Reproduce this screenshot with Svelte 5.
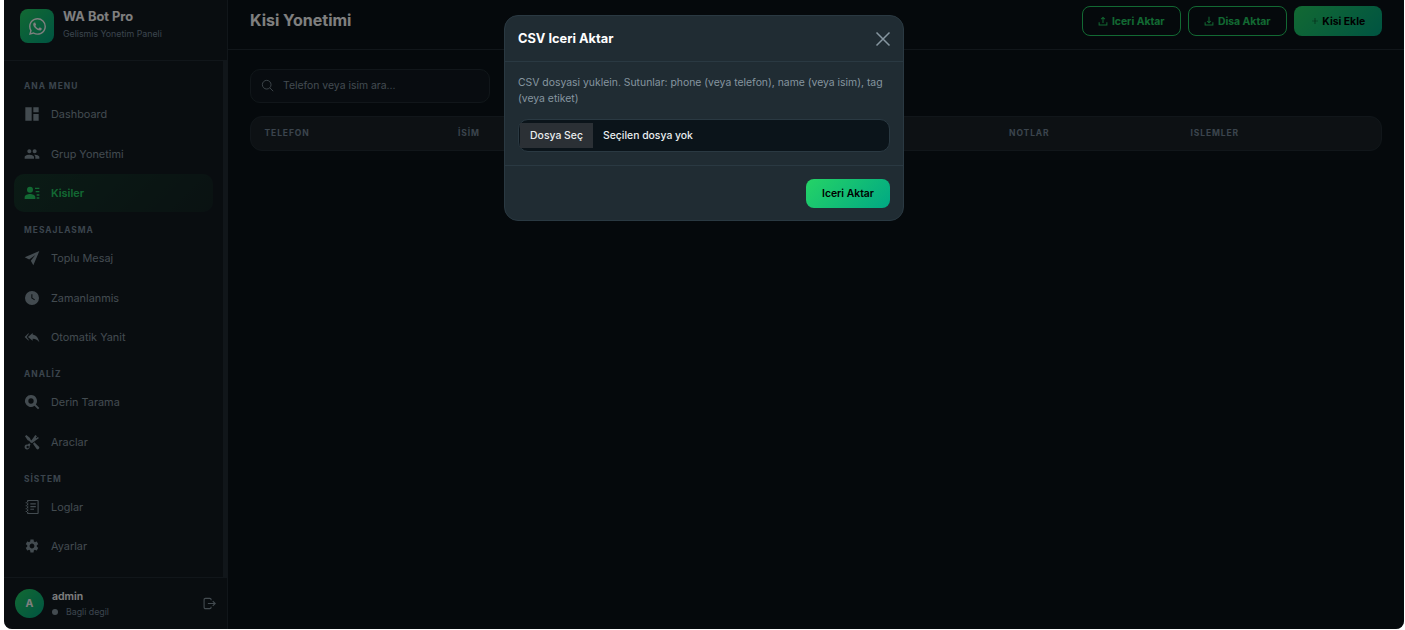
<script>
  const groups = [
    { title: 'ANA MENU', items: [
      { label: 'Dashboard', icon: 'dash' },
      { label: 'Grup Yonetimi', icon: 'group' },
      { label: 'Kisiler', icon: 'contacts', active: true }
    ] },
    { title: 'MESAJLASMA', items: [
      { label: 'Toplu Mesaj', icon: 'send' },
      { label: 'Zamanlanmis', icon: 'clock' },
      { label: 'Otomatik Yanit', icon: 'reply' }
    ] },
    { title: 'ANALİZ', items: [
      { label: 'Derin Tarama', icon: 'search' },
      { label: 'Araclar', icon: 'tools' }
    ] },
    { title: 'SİSTEM', items: [
      { label: 'Loglar', icon: 'log' },
      { label: 'Ayarlar', icon: 'gear' }
    ] }
  ];
  const columns = [
    { label: 'TELEFON', w: 193.5 },
    { label: 'İSİM', w: 551 },
    { label: 'NOTLAR', w: 181.5 },
    { label: 'ISLEMLER', w: 170 }
  ];
</script>

{#snippet navIcon(name)}
  <svg class="nav-icon" viewBox="0 0 24 24" fill="currentColor">
    {#if name === 'dash'}
      <path d="M2 2h9.500v20H2zM14 2h8v7.500h-8zM14 12h8v10h-8z" />
    {:else if name === 'group'}
      <path d="M16 11c1.660 0 2.990-1.340 2.990-3S17.660 5 16 5c-1.660 0-3 1.340-3 3s1.340 3 3 3zm-8 0c1.660 0 2.990-1.340 2.990-3S9.660 5 8 5C6.340 5 5 6.340 5 8s1.340 3 3 3zm0 2c-2.330 0-7 1.170-7 3.500V19h14v-2.500c0-2.330-4.670-3.500-7-3.500zm8 0c-.29 0-.62.02-.97.05 1.160.84 1.970 1.970 1.970 3.450V19h6v-2.500c0-2.330-4.670-3.500-7-3.500z" />
    {:else if name === 'contacts'}
      <path d="M9 11.500a4.500 4.500 0 1 0 0-9 4.500 4.500 0 0 0 0 9zm0 2c-3.300 0-8 1.700-8 4.700V21h16v-2.800c0-3-4.700-4.700-8-4.700zM16.500 4H23v2h-6.500zM17.500 9H23v2h-5.500zM19 14h4v2h-4zM19 18.500h4v2h-4z" />
    {:else if name === 'send'}
      <path d="M23 1.500 1 11l6.800 3.200L17 7.500l-6.800 8.700L14 23z" />
    {:else if name === 'clock'}
      <path fill-rule="evenodd" d="M12 1.500a10.500 10.500 0 1 0 0 21 10.500 10.500 0 0 0 0-21zm-1 5h1.600v5.200l3.800 2.400-.8 1.300-4.600-2.900z" />
    {:else if name === 'reply'}
      <path d="M7 7.500V6L1 12l6 5.500V16l-3-4zm6 .8V6l-7 6 7 5.500v-3c5 0 7.500 2 10 5.500-1-5.500-4-10.500-10-11.700z" />
    {:else if name === 'search'}
      <path fill-rule="evenodd" d="M10.500 1.500a9 9 0 1 0 5.200 16.300l5.300 5.200 2-2-5.200-5.300A9 9 0 0 0 10.500 1.500zm0 5a4 4 0 1 1 0 8 4 4 0 0 1 0-8z" />
    {:else if name === 'tools'}
      <path d="M17 1.500 9.500 12l2.300 2L22.500 6l-1.800-1.500-2 1.800-1-1 1.800-2z" />
      <path d="M1.500 3.500 3.500 1.500l5.500 4.500.5 2 3 3-2 2-3-3-2-.5z" />
      <path d="M13.500 14.500l2-2 7 6.500a2.500 2.500 0 0 1-3.500 3.500zM9.800 15.800l-2-2-2 2a3.800 3.800 0 1 0 2.500 2.500zM5.500 21.300a1.800 1.800 0 1 1 0-3.600 1.800 1.800 0 0 1 0 3.600z" />
    {:else if name === 'log'}
      <path fill-rule="evenodd" d="M6 1.500h14.500A1.500 1.500 0 0 1 22 3v18a1.500 1.500 0 0 1-1.500 1.500H6A1.500 1.500 0 0 1 4.500 21V3A1.500 1.500 0 0 1 6 1.500zm.3 1.600v17.800h14V3.100zM9.500 6.500h8.200v1.700H9.500zM9.500 10.500h8.200v1.700H9.500zM9.500 14.500h5.500v1.700H9.500zM2.500 5h4v1.500h-4zM2.500 9.500h4V11h-4zM2.500 14h4v1.500h-4zM2.500 18h4v1.500h-4z" />
    {:else}
      <path d="M19.140 12.940c.04-.3.06-.61.06-.94 0-.32-.02-.64-.07-.94l2.030-1.580c.18-.14.23-.41.12-.61l-1.920-3.320c-.12-.22-.37-.29-.59-.22l-2.390.96c-.5-.38-1.030-.7-1.620-.94l-.36-2.540c-.04-.24-.24-.41-.48-.41h-3.840c-.24 0-.43.17-.47.41l-.36 2.540c-.59.24-1.130.57-1.620.94l-2.390-.96c-.22-.08-.47 0-.59.22L2.740 8.870c-.12.21-.08.47.12.61l2.030 1.580c-.05.3-.09.63-.09.94s.02.64.07.94l-2.030 1.580c-.18.14-.23.41-.12.61l1.920 3.320c.12.22.37.29.59.22l2.390-.96c.5.38 1.030.7 1.620.94l.36 2.540c.05.24.24.41.48.41h3.840c.24 0 .44-.17.47-.41l.36-2.540c.59-.24 1.130-.56 1.620-.94l2.390.96c.22.08.47 0 .59-.22l1.920-3.320c.12-.22.07-.47-.12-.61l-2.010-1.580zM12 15.600c-1.980 0-3.600-1.620-3.600-3.600s1.620-3.600 3.600-3.600 3.600 1.620 3.600 3.600-1.620 3.600-3.600 3.600z" />
    {/if}
  </svg>
{/snippet}

<div class="window">
  <aside class="sidebar">
    <div class="brand">
      <div class="logo">
        <svg viewBox="0 0 16 16" fill="#fff"><path d="M13.601 2.326A7.854 7.854 0 0 0 7.994 0C3.627 0 .068 3.558.064 7.926c0 1.399.366 2.76 1.057 3.965L0 16l4.204-1.102a7.933 7.933 0 0 0 3.79.965h.004c4.368 0 7.926-3.558 7.93-7.93A7.898 7.898 0 0 0 13.6 2.326zM7.994 14.521a6.573 6.573 0 0 1-3.356-.92l-.24-.144-2.494.654.666-2.433-.156-.251a6.56 6.56 0 0 1-1.007-3.505c0-3.626 2.957-6.584 6.591-6.584a6.56 6.56 0 0 1 4.66 1.931 6.557 6.557 0 0 1 1.928 4.66c-.004 3.639-2.961 6.592-6.592 6.592zm3.615-4.934c-.197-.099-1.17-.578-1.353-.646-.182-.065-.315-.099-.445.099-.133.197-.513.646-.627.775-.114.133-.232.148-.43.05-.197-.1-.836-.308-1.592-.985-.59-.525-.985-1.175-1.103-1.372-.114-.198-.011-.304.088-.403.087-.088.197-.232.296-.346.1-.114.133-.198.198-.33.065-.134.034-.248-.015-.347-.05-.099-.445-1.076-.612-1.47-.16-.389-.323-.335-.445-.34-.114-.007-.247-.007-.38-.007a.729.729 0 0 0-.529.247c-.182.198-.691.677-.691 1.654 0 .977.71 1.916.81 2.049.098.133 1.394 2.132 3.383 2.992.47.205.84.326 1.129.418.475.152.904.129 1.246.08.38-.058 1.171-.48 1.338-.943.164-.464.164-.86.114-.943-.049-.084-.182-.133-.38-.232z" /></svg>
      </div>
      <div>
        <div class="brand-name">WA Bot Pro</div>
        <div class="brand-sub">Gelismis Yonetim Paneli</div>
      </div>
    </div>

    <nav class="nav">
      {#each groups as group}
        <div class="group-title">{group.title}</div>
        {#each group.items as item}
          <div class="nav-item" class:active={item.active}>
            {@render navIcon(item.icon)}
            <span>{item.label}</span>
          </div>
        {/each}
      {/each}
    </nav>

    <div class="user">
      <div class="avatar">A</div>
      <div class="user-info">
        <div class="user-name">admin</div>
        <div class="user-status"><i></i>Bagli degil</div>
      </div>
      <svg class="logout" viewBox="0 0 24 24" fill="none" stroke="currentColor" stroke-width="2"><path d="M15 6V5a2.500 2.500 0 0 0-2.500-2.500h-8A2.500 2.500 0 0 0 2 5v14a2.500 2.500 0 0 0 2.500 2.500h8A2.500 2.500 0 0 0 15 19v-1M9 12h13.500M18 7.500l4.500 4.500-4.500 4.500" /></svg>
    </div>
  </aside>

  <main class="main">
    <header class="topbar">
      <h1>Kisi Yonetimi</h1>
      <div class="actions">
        <button class="btn outline">
          <svg viewBox="0 0 16 16" fill="currentColor"><path d="M8 1 4.500 4.500l1 1L7.200 3.800V11h1.600V3.800l1.700 1.700 1-1zM1 10h1.600v3.400h10.800V10H15v5H1z" /></svg>
          Iceri Aktar
        </button>
        <button class="btn outline">
          <svg viewBox="0 0 16 16" fill="currentColor"><path d="M8 12 4.500 8.500l1-1 1.700 1.700V1h1.600v8.200l1.700-1.700 1 1zM1 10h1.600v3.400h10.800V10H15v5H1z" /></svg>
          Disa Aktar
        </button>
        <button class="btn solid">
          <svg viewBox="0 0 16 16" fill="currentColor"><path d="M7.300 2h1.400v5.300H14v1.400H8.700V14H7.300V8.700H2V7.300h5.300z" /></svg>
          Kisi Ekle
        </button>
      </div>
    </header>

    <div class="content">
      <div class="search">
        <svg viewBox="0 0 24 24" fill="none" stroke="currentColor" stroke-width="1.600"><circle cx="10.500" cy="10.500" r="8" /><path d="m16.500 16.500 6 6" /></svg>
        <span>Telefon veya isim ara...</span>
      </div>
      <div class="table-head">
        {#each columns as col}
          <div class="th" style="width:{col.w}px">{col.label}</div>
        {/each}
      </div>
    </div>
  </main>

  <div class="backdrop"></div>

  <div class="modal">
    <div class="modal-head">
      <h2>CSV Iceri Aktar</h2>
      <svg class="close" viewBox="0 0 16 16" fill="none" stroke="currentColor" stroke-width="1.500"><path d="m1.500 1.500 13 13M14.500 1.500l-13 13" /></svg>
    </div>
    <div class="modal-body">
      <p>CSV dosyasi yuklein. Sutunlar: phone (veya telefon), name (veya isim), tag (veya etiket)</p>
      <div class="file">
        <span class="file-btn">Dosya Seç</span>
        <span class="file-name">Seçilen dosya yok</span>
      </div>
    </div>
    <div class="modal-foot">
      <button class="submit">Iceri Aktar</button>
    </div>
  </div>
</div>

<style>
  :global(body) {
    background: #fff;
    overflow: hidden;
    font-family: Inter, "Liberation Sans", sans-serif;
  }

  .window {
    position: relative;
    display: flex;
    width: 1400px;
    height: 629px;
    margin-left: 4px;
    overflow: hidden;
    border-radius: 0 0 8px 8px;
  }

  .sidebar {
    display: flex;
    flex-direction: column;
    flex: none;
    box-sizing: border-box;
    width: 224px;
    background: #131b21;
    border-right: 1px solid #222d34;
  }

  .brand {
    display: flex;
    align-items: flex-start;
    gap: 9px;
    box-sizing: border-box;
    height: 61px;
    padding: 9px 16px 0;
    border-bottom: 1px solid #222d34;
    flex: none;
  }

  .logo {
    display: flex;
    align-items: center;
    justify-content: center;
    width: 34px;
    height: 34px;
    border-radius: 8px;
    background: linear-gradient(135deg, #25d366, #00a884);
  }

  .logo svg {
    width: 17px;
    height: 17px;
  }

  .brand-name {
    font-size: 12.800px;
    line-height: 15px;
    font-weight: 700;
    color: #fff;
  }

  .brand-sub {
    margin-top: 4px;
    font-size: 8.800px;
    line-height: 12px;
    color: #76899b;
  }

  .nav {
    flex: 1;
    padding: 0 10px;
    border-right: 4px solid #222d34;
  }

  .group-title {
    height: 13px;
    margin-top: 12px;
    padding-left: 10px;
    font-size: 8.400px;
    line-height: 13px;
    font-weight: 700;
    letter-spacing: 1px;
    color: #76899b;
  }

  .group-title:first-child {
    margin-top: 19px;
  }

  .nav-item {
    display: flex;
    align-items: center;
    gap: 11px;
    height: 38px;
    margin-top: 1.500px;
    padding-left: 10px;
    border-radius: 10px;
    font-size: 10.880px;
    color: #8696a0;
  }

  .group-title + .nav-item {
    margin-top: 2px;
  }

  .nav-item.active {
    color: #25d366;
    font-weight: 600;
    background: linear-gradient(135deg, rgba(37, 211, 102, 0.15), rgba(37, 211, 102, 0.05));
  }

  .nav-icon {
    width: 16px;
    height: 16px;
    flex: none;
  }

  .user {
    display: flex;
    align-items: center;
    box-sizing: border-box;
    height: 52px;
    padding: 0 11px;
    border-top: 1px solid #222d34;
    flex: none;
  }

  .avatar {
    display: flex;
    align-items: center;
    justify-content: center;
    width: 29px;
    height: 29px;
    border-radius: 50%;
    background: linear-gradient(135deg, #25d366, #00a884);
    color: #fff;
    font-size: 10.500px;
    font-weight: 700;
  }

  .user-info {
    flex: 1;
    margin-left: 8px;
  }

  .user-name {
    font-size: 10.500px;
    line-height: 14px;
    font-weight: 600;
    color: #fff;
  }

  .user-status {
    display: flex;
    align-items: center;
    margin-top: 2px;
    font-size: 8.800px;
    line-height: 12px;
    color: #76899b;
  }

  .user-status i {
    width: 6px;
    height: 6px;
    margin-right: 8px;
    border-radius: 50%;
    background: #8696a0;
  }

  .logout {
    width: 13px;
    height: 13px;
    color: #8696a0;
  }

  .main {
    flex: 1;
    min-width: 0;
    background: #0a1318;
  }

  .topbar {
    display: flex;
    align-items: flex-start;
    justify-content: space-between;
    height: 50px;
    padding: 6px 22px 0 22px;
    box-sizing: border-box;
    border-bottom: 1px solid #222d34;
  }

  h1 {
    margin: 0;
    font-size: 16px;
    line-height: 28px;
    font-weight: 700;
    color: #fff;
  }

  .actions {
    display: flex;
    gap: 7px;
  }

  .btn {
    display: flex;
    align-items: center;
    justify-content: center;
    gap: 3.500px;
    height: 30px;
    padding: 0;
    border-radius: 8px;
    font: 700 10.400px Inter, sans-serif;
    cursor: pointer;
  }

  .btn svg {
    width: 10px;
    height: 10px;
  }

  .btn.outline {
    width: 99px;
    background: transparent;
    border: 1px solid #25d366;
    color: #25d366;
  }

  .btn.solid {
    width: 88px;
    border: 0;
    color: #000;
    background: linear-gradient(135deg, #25d366, #00a884);
  }

  .btn.solid svg {
    width: 8px;
    height: 8px;
    opacity: 0.6;
  }

  .content {
    padding: 19px 22px 0 22px;
  }

  .search {
    display: flex;
    align-items: center;
    gap: 9px;
    width: 240px;
    height: 34px;
    padding: 0 0 1px 10px;
    box-sizing: border-box;
    background: #101920;
    border: 1px solid #222d34;
    border-radius: 10px;
    color: #8696a0;
    font-size: 10.400px;
  }

  .search svg {
    width: 13px;
    height: 13px;
  }

  .table-head {
    display: flex;
    align-items: center;
    height: 35px;
    margin-top: 13px;
    padding: 0 0 1px 13.500px;
    box-sizing: border-box;
    background: #1a2329;
    border: 1px solid #222d34;
    border-radius: 12px;
  }

  .th {
    flex: none;
    font-size: 8.500px;
    font-weight: 700;
    letter-spacing: 0.900px;
    color: #76899b;
  }

  .backdrop {
    position: absolute;
    inset: 0;
    background: rgba(0, 0, 0, 0.5);
  }

  .modal {
    position: absolute;
    top: 15px;
    left: 500px;
    width: 400px;
    height: 206px;
    box-sizing: border-box;
    background: #202c33;
    border: 1px solid #2a3942;
    border-radius: 14px;
  }

  .modal-head {
    display: flex;
    align-items: center;
    justify-content: space-between;
    height: 46px;
    padding: 0 12px 0 13px;
    box-sizing: border-box;
    border-bottom: 1px solid #2a3942;
  }

  h2 {
    margin: 0;
    font-size: 12.800px;
    font-weight: 700;
    color: #fff;
  }

  .close {
    width: 16px;
    height: 16px;
    color: #8696a0;
  }

  .modal-body {
    height: 104px;
    padding: 13px 13px 0;
    box-sizing: border-box;
    border-bottom: 1px solid #2a3942;
  }

  p {
    margin: 0;
    font-size: 10.400px;
    line-height: 16px;
    color: #8696a0;
  }

  .file {
    display: flex;
    align-items: center;
    height: 33px;
    margin-top: 12px;
    padding: 3px 1px;
    box-sizing: border-box;
    background: #0b141a;
    border: 1px solid #2a3942;
    border-radius: 10px;
    font-size: 10.400px;
  }

  .file-btn {
    display: flex;
    align-items: center;
    justify-content: center;
    width: 73px;
    height: 25px;
    background: #2b3035;
    color: #e9edef;
    font-weight: 500;
  }

  .file-name {
    margin-left: 10px;
    color: #e9edef;
    font-weight: 500;
  }

  .modal-foot {
    display: flex;
    justify-content: flex-end;
    padding: 13px 13px 0;
  }

  .submit {
    width: 84px;
    height: 29px;
    padding: 0;
    border: 0;
    border-radius: 8px;
    background: linear-gradient(135deg, #25d366, #00a884);
    color: #000;
    font: 600 10.400px Inter, sans-serif;
  }
</style>
